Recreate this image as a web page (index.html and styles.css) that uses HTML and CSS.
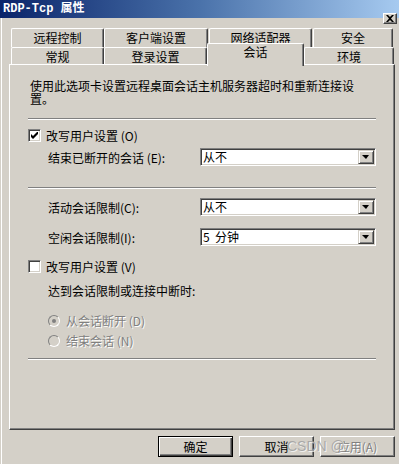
FILE: index.html
```html
<!DOCTYPE html>
<html lang="zh-CN">
<head>
  <meta charset="UTF-8">
  <title>RDP-Tcp 属性</title>
  <link rel="stylesheet" href="styles.css">
</head>
<body>
  <div class="window">
    <div class="titlebar">
      <span class="title">RDP-Tcp 属性</span>
      <span class="close">
        <svg width="8" height="7" viewBox="0 0 8 7"><path d="M0 0h2l2 2 2-2h2L5 3.5 8 7H6L4 5 2 7H0l3-3.5z" fill="#000"/></svg>
      </span>
    </div>

    <div class="tabs">
      <div class="tabrow first">
        <div class="tab w1">远程控制</div>
        <div class="tab w2">客户端设置</div>
        <div class="tab w3">网络适配器</div>
        <div class="tab w4">安全</div>
      </div>
      <div class="tabrow second">
        <div class="tab w1">常规</div>
        <div class="tab w5">登录设置</div>
        <div class="tab active">会话</div>
        <div class="tab w6">环境</div>
      </div>
    </div>

    <div class="panel">
      <div class="inner">
        <p class="desc">使用此选项卡设置远程桌面会话主机服务器超时和重新连接设置。</p>
        <div class="sep s1"></div>

        <label class="check-row r1">
          <span class="checkbox">
            <svg width="7" height="7" viewBox="0 0 7 7"><path d="M0 2v3l2 2 5-5V-1L2 4z" fill="#000"/></svg>
          </span>
          改写用户设置 (O)
        </label>
        <div class="field r2">
          <span>结束已断开的会话 (E):</span>
          <div class="combo"><span class="value">从不</span><span class="drop"><i></i></span></div>
        </div>

        <div class="sep s2"></div>
        <div class="field r3">
          <span>活动会话限制(C):</span>
          <div class="combo"><span class="value">从不</span><span class="drop"><i></i></span></div>
        </div>
        <div class="field r4">
          <span>空闲会话限制(I):</span>
          <div class="combo"><span class="value">5&nbsp; 分钟</span><span class="drop"><i></i></span></div>
        </div>

        <label class="check-row r5">
          <span class="checkbox"></span>
          改写用户设置 (V)
        </label>
        <p class="hint">达到会话限制或连接中断时:</p>
        <div class="radio-row r6 disabled"><span class="radio on"></span>从会话断开 (D)</div>
        <div class="radio-row r7 disabled"><span class="radio"></span>结束会话 (N)</div>
        <div class="sep s3"></div>
      </div>
    </div>

    <div class="footer">
      <button class="btn default">确定</button>
      <button class="btn">取消</button>
      <button class="btn disabled">应用(A)</button>
      <span class="watermark">CSDN @</span>
    </div>
  </div>
</body>
</html>
```

FILE: styles.css
```css
body {
  margin: 0;
  font-family: "Noto Sans CJK SC", "DejaVu Sans", sans-serif;
  font-size: 12px;
  color: #000;
  background-color: #d4d0c8;
}
.window {
  position: relative;
  width: 399px;
  height: 464px;
  box-sizing: border-box;
  background-color: #d4d0c8;
  box-shadow: inset 1px 0 #d4d0c8, inset 2px 0 #fff;
  overflow: hidden;
}
.titlebar {
  position: relative;
  height: 18px;
  background: linear-gradient(to right, #0a246a, #4a72aa 50%, #a6caf0);
  color: #fff;
}
.title {
  display: block;
  padding-left: 3px;
  line-height: 19px;
  font-family: "Liberation Mono", "Noto Sans CJK SC", monospace;
  font-weight: bold;
  font-size: 12px;
}
.close {
  position: absolute;
  top: 13px;
  right: 2px;
  width: 14px;
  height: 11px;
  box-sizing: border-box;
  background-color: #d4d0c8;
  border: 1px solid;
  border-color: #fff #404040 #404040 #fff;
  box-shadow: inset -1px -1px #808080;
  display: flex;
  align-items: center;
  justify-content: center;
}

/* tabs */
.tabs {
  margin: 10px 0 0 11px;
}
.tabrow {
  display: flex;
}
.tabrow.first {
  height: 19px;
}
.tabrow.second {
  height: 17px;
  align-items: flex-end;
}
.tab {
  box-sizing: border-box;
  height: 100%;
  padding-top: 2px;
  background-color: #d4d0c8;
  border-top: 1px solid #fff;
  border-left: 1px solid #fff;
  border-right: 1px solid #404040;
  box-shadow: inset -1px 0 #808080;
  border-radius: 2px 2px 0 0;
  text-align: center;
  line-height: 13px;
}
.w1 { width: 93px; }
.w2 { width: 104px; margin-right: 1px; }
.w3 { width: 103px; margin-right: 1px; }
.w4 { width: 80px; }
.w5 { width: 103px; }
.w6 { width: 90px; }
.tabrow.second .tab.active {
  position: relative;
  z-index: 1;
  width: 97px;
  height: 23px;
  margin-bottom: -2px;
  padding-top: 1px;
}

/* panel */
.panel {
  width: 386px;
  height: 366px;
  margin-left: 9px;
  box-sizing: border-box;
  border: 1px solid;
  border-color: #fff #404040 #404040 #fff;
  box-shadow: inset -1px -1px #808080;
}
.inner {
  width: 348px;
  margin-left: 18px;
  padding-top: 14px;
}
.desc {
  margin: 0;
  width: 330px;
  padding-left: 2px;
  line-height: 13px;
}
.sep {
  height: 0;
  border-top: 1px solid #808080;
  border-bottom: 1px solid #fff;
}
.s1 { margin-top: 13px; }
.s2 { margin-top: 21px; }
.s3 { margin-top: 10px; }

.check-row {
  display: flex;
  align-items: center;
  height: 15px;
  gap: 5px;
}
.r1 { margin-top: 8px; }
.r5 { margin-top: 13px; }
.checkbox {
  width: 13px;
  height: 13px;
  box-sizing: border-box;
  background-color: #fff;
  border: 1px solid;
  border-color: #808080 #fff #fff #808080;
  box-shadow: inset 1px 1px #404040, inset -1px -1px #d4d0c8;
  display: flex;
  align-items: center;
  justify-content: center;
}

.field {
  display: flex;
  align-items: center;
  padding-left: 20px;
}
.field .combo {
  margin-left: auto;
}
.r2 { margin-top: 5px; }
.r3 { margin-top: 9px; }
.r4 { margin-top: 12px; }
.combo {
  width: 176px;
  height: 18px;
  box-sizing: border-box;
  background-color: #fff;
  border: 1px solid;
  border-color: #808080 #fff #fff #808080;
  box-shadow: inset 1px 1px #404040, inset -1px -1px #d4d0c8;
  display: flex;
  align-items: center;
}
.combo .value {
  padding-left: 2px;
  line-height: 14px;
}
.drop {
  width: 16px;
  height: 14px;
  margin: 0 1px 0 auto;
  box-sizing: border-box;
  background-color: #d4d0c8;
  border: 1px solid;
  border-color: #d4d0c8 #404040 #404040 #d4d0c8;
  box-shadow: inset 1px 1px #fff, inset -1px -1px #808080;
  display: flex;
  align-items: center;
  justify-content: center;
}
.drop i {
  width: 0;
  height: 0;
  border-top: 4px solid #000;
  border-left: 4px solid transparent;
  border-right: 3px solid transparent;
  margin-left: -1px;
}

.hint {
  margin: 10px 0 0 20px;
  line-height: 14px;
}

.radio-row {
  display: flex;
  align-items: center;
  gap: 6px;
  height: 15px;
  padding-left: 20px;
}
.r6 { margin-top: 15px; }
.r7 { margin-top: 5px; }
.disabled {
  color: #808080;
  text-shadow: 1px 1px 0 #fff;
}
.radio {
  width: 12px;
  height: 12px;
  box-sizing: border-box;
  border-radius: 50%;
  border: 1px solid;
  border-color: #808080 #fff #fff #808080;
  background-color: #d4d0c8;
  display: flex;
  align-items: center;
  justify-content: center;
}
.radio.on::after {
  content: "";
  width: 4px;
  height: 4px;
  border-radius: 50%;
  background-color: #808080;
}

/* buttons */
.footer {
  position: relative;
  display: flex;
  justify-content: flex-end;
  gap: 6px;
  margin-top: 6px;
  padding-right: 4px;
}
.btn {
  width: 75px;
  height: 21px;
  box-sizing: border-box;
  padding: 0;
  font-family: inherit;
  font-size: 12px;
  color: #000;
  background-color: #d4d0c8;
  border: 1px solid;
  border-color: #fff #404040 #404040 #fff;
  box-shadow: inset -1px -1px #808080;
}
.btn.default {
  border: 1px solid #000;
  box-shadow: inset 1px 1px #fff, inset -1px -1px #404040, inset -2px -2px #808080;
}
.btn.disabled {
  color: #808080;
  text-shadow: 1px 1px 0 #fff;
}
.watermark {
  position: absolute;
  left: 287px;
  top: 1px;
  font-family: "Liberation Sans", "Noto Sans CJK SC", sans-serif;
  font-size: 14px;
  line-height: 19px;
  color: rgba(160, 160, 160, 0.85);
  text-shadow: 1px 1px 0 rgba(255, 255, 255, 0.7);
  pointer-events: none;
}
```
